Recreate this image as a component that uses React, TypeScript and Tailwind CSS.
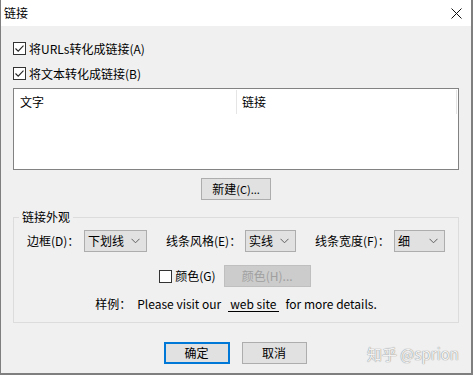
import React from "react";

const font = { fontFamily: '"Noto Sans CJK SC", "Noto Sans", sans-serif' };

function Check({ checked }: { checked: boolean }) {
  return (
    <svg width="13" height="13" viewBox="0 0 13 13" className="shrink-0">
      <rect x="0.5" y="0.5" width="12" height="12" fill="#fff" stroke="#333" />
      {checked && <path d="M2.5 6.5 L5.2 9.2 L10.5 3.6" fill="none" stroke="#222" strokeWidth="1.1" />}
    </svg>
  );
}

function Chevron() {
  return (
    <svg width="9" height="6" viewBox="0 0 9 6" className="shrink-0">
      <path d="M0.5 0.8 L4.5 4.8 L8.5 0.8" fill="none" stroke="#606060" strokeWidth="1" />
    </svg>
  );
}

function Select({ value, width }: { value: string; width: string }) {
  return (
    <div className={`${width} h-[22px] bg-[#e1e1e1] border border-[#adadad] flex items-center justify-between pl-[3px] pr-[6px]`}>
      <span className="text-[12px] leading-none">{value}</span>
      <Chevron />
    </div>
  );
}

export default function App() {
  return (
    <div
      className="w-[473px] h-[375px] bg-[#f0f0f0] border-l border-r-2 border-b-2 border-[#7f7f7f] text-black flex flex-col relative"
      style={font}
    >
      <div className="h-[26px] bg-white flex items-center justify-between pl-[3px] pr-[9px] shrink-0">
        <span className="text-[12px] leading-none">链接</span>
        <svg width="11" height="11" viewBox="0 0 11 11">
          <path d="M0.5 0.5 L10.5 10.5 M10.5 0.5 L0.5 10.5" stroke="#111" strokeWidth="1" />
        </svg>
      </div>

      <div className="flex flex-col px-[12px]">
        <div className="mt-[16px] h-[13px] flex items-center gap-[3px]">
          <Check checked />
          <span className="text-[12px] leading-none">将URLs转化成链接(A)</span>
        </div>
        <div className="mt-[12px] h-[13px] flex items-center gap-[3px]">
          <Check checked />
          <span className="text-[12px] leading-none">将文本转化成链接(B)</span>
        </div>

        <div className="mt-[8px] h-[82px] bg-white border border-[#828282] flex flex-col">
          <div className="h-[26px] flex">
            <div className="w-[223px] border-r border-[#e5e5e5] my-[1px] flex items-center pl-[6px] text-[12px]">文字</div>
            <div className="flex-1 border-r border-[#e5e5e5] my-[1px] mr-[1px] flex items-center pl-[5px] text-[12px]">链接</div>
          </div>
        </div>

        <div className="mt-[8px] flex justify-center">
          <div className="w-[70px] h-[22px] bg-[#e1e1e1] border border-[#adadad] flex items-center justify-center text-[12px]">
            <span>新建</span>
            <span className="text-[11px]">(C)...</span>
          </div>
        </div>

        <fieldset className="mt-[9px] h-[114px] border border-[#dcdcdc] flex flex-col">
          <legend className="ml-[5px] px-[3px] text-[12px] leading-[16px]">链接外观</legend>
          <div className="mt-[5px] flex items-center pl-[13px] text-[12px]">
            <span className="w-[57px]">边框(D)：</span>
            <Select value="下划线" width="w-[63px]" />
            <span className="w-[79px] ml-[19px]">线条风格(E)：</span>
            <Select value="实线" width="w-[51px]" />
            <span className="w-[79px] ml-[19px]">线条宽度(F)：</span>
            <Select value="细" width="w-[51px]" />
          </div>
          <div className="mt-[13px] flex items-center justify-center text-[12px] pr-[2px]">
            <Check checked={false} />
            <span className="ml-[3px]">颜色(G)</span>
            <div className="ml-[8px] w-[87px] h-[22px] bg-[#cccccc] border border-[#bfbfbf] flex items-center justify-center text-[#a0a0a0]">
              颜色(H)...
            </div>
          </div>
          <div className="mt-[9px] flex items-center justify-center text-[12px] leading-[16px]">
            <span>样例：</span>
            <span className="ml-[6px]">Please visit our</span>
            <span className="ml-[7px] px-[2px] border-b border-black leading-[14px]">web site</span>
            <span className="ml-[7px]">for more details.</span>
          </div>
        </fieldset>

        <div className="mt-[19px] flex justify-center gap-[12px] pr-[2px]">
          <div className="w-[66px] h-[22px] bg-[#e1e1e1] border-2 border-[#0078d7] flex items-center justify-center text-[12px]">
            确定
          </div>
          <div className="w-[65px] h-[22px] bg-[#e1e1e1] border border-[#adadad] flex items-center justify-center text-[12px]">
            取消
          </div>
        </div>
      </div>

      <div
        className="absolute right-[12px] bottom-[12px] text-[15px] leading-none text-[#f2f2f2]"
        style={{ textShadow: "0 0 1px #8a8a8a, 0 0 1px #a0a0a0" }}
      >
        知乎 @sprion
      </div>
    </div>
  );
}
